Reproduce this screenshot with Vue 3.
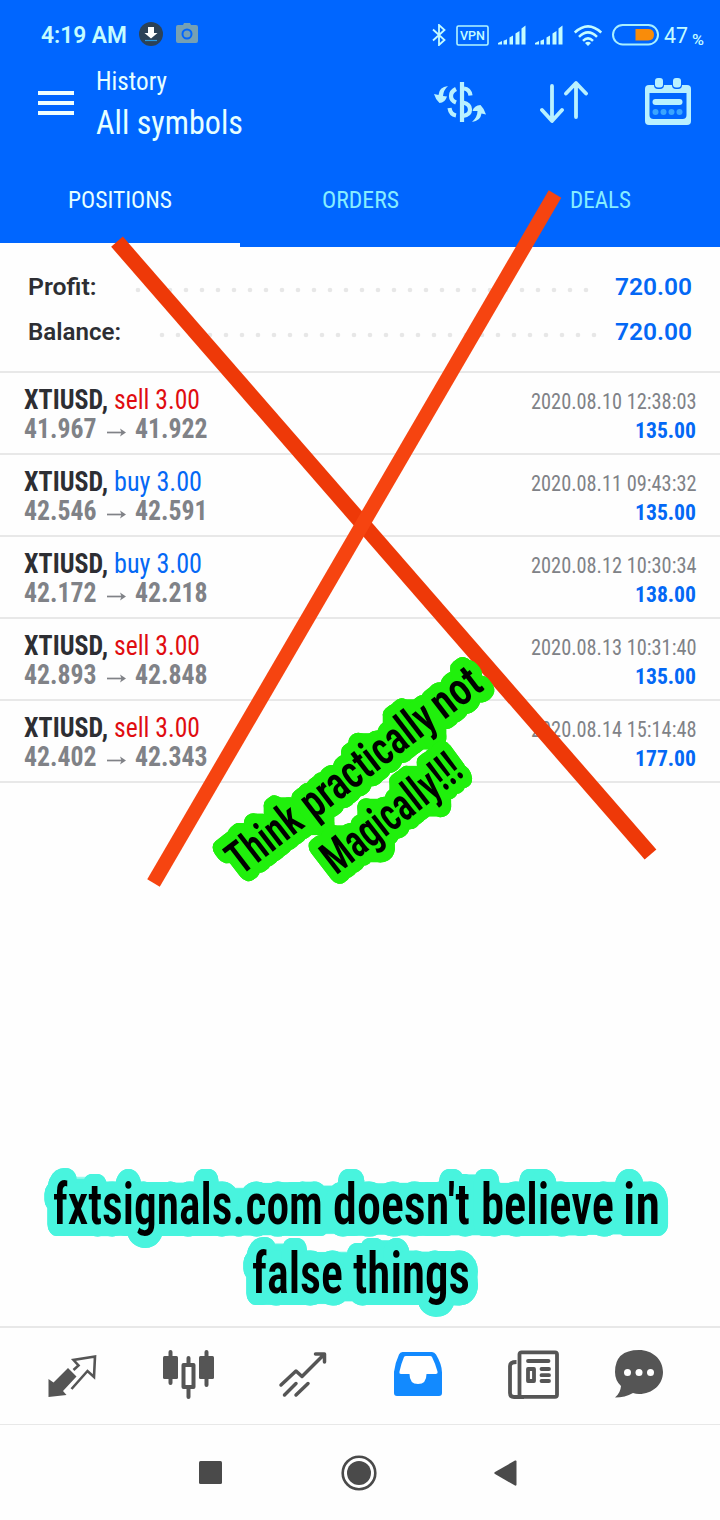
<template>
  <div class="screen">
    <header class="header">
      <div class="status">
        <FitText class="clock" text="4:19 AM" :w="86" />
        <svg class="download" width="24" height="24" viewBox="0 0 24 24">
          <circle cx="12" cy="12" r="12" fill="#2c4257" />
          <path d="M9 5h6v6h3.500L12 16.500 5.500 11H9z" fill="#fff" />
          <path d="M6 18.500h12" stroke="#2b9be0" stroke-width="1.200" />
        </svg>
        <svg class="camera" width="22" height="20" viewBox="0 0 22 20">
          <path d="M7 2l1-2h6l1 2h5q2 0 2 2v14q0 2-2 2H2q-2 0-2-2V4q0-2 2-2z" fill="#76a0b4" />
          <circle cx="11" cy="11" r="4.500" fill="none" stroke="#0066ff" stroke-width="2" />
        </svg>
        <svg class="bluetooth" width="14" height="22" viewBox="0 0 14 22">
          <path d="M1 5.500L12.500 16 7 21V1l5.500 5L1 16.500" fill="none" stroke="#c4fcff" stroke-width="1.800" />
        </svg>
        <svg class="vpn" width="33" height="21" viewBox="0 0 33 21">
          <rect x="1" y="1" width="31" height="19" rx="1.500" fill="none" stroke="#b4f6ff" stroke-width="1.600" />
          <text x="4" y="14.700" textLength="25" lengthAdjust="spacingAndGlyphs">VPN</text>
        </svg>
        <svg v-for="n in 2" :key="n" class="signal" width="28" height="20" viewBox="0 0 28 20">
          <path d="M0 19.500v-1.500l4-2v3.500zM5.500 15.800l3.500-1.500v5.200H5.500zM11.500 12.500l3.500-2v9h-3.500zM17.500 8.500l4-2.500v13.500h-4zM23.500 3.500l4-3v19h-4z" fill="#c4fcff" />
        </svg>
        <svg class="wifi" width="28" height="21" viewBox="0 0 28 21">
          <g fill="none" stroke="#c4fcff" stroke-width="2.500">
            <path d="M.8 7.500Q14-4.800 27.200 7.500" />
            <path d="M5 11.800Q14 3 23 11.800" />
            <path d="M9 15.800Q14 10.800 19 15.800" />
          </g>
          <path d="M11 18q3-2.500 6 0l-3 3z" fill="#c4fcff" />
        </svg>
        <svg class="battery" width="47" height="22" viewBox="0 0 47 22">
          <rect x="1" y="1" width="45" height="19.500" rx="9.700" fill="none" stroke="#a8efff" stroke-width="2" />
          <path d="M23.500 5H36q6 0 6 5.800T36 16.500H23.500z" fill="#f98c0a" />
        </svg>
        <FitText class="level" text="47" :w="24" />
        <FitText class="percent" text="%" :w="12" />
      </div>

      <div class="bar">
        <div class="menu"><i></i><i></i><i></i></div>
        <div class="title">
          <FitText class="small" text="History" :w="71" />
          <FitText class="big" text="All symbols" :w="147" />
        </div>
        <svg class="currency" width="54" height="44" viewBox="0 0 54 44">
          <g fill="none" stroke="#b9f1ff" stroke-width="4.200">
            <path d="M28 2v40" />
            <path d="M22 9q-5 2.500-5 7t5 6.500M30 8.500q5.500.5 6.500 7M15.500 28q1 6.500 6.500 7.500M29 22.500q7 1.500 7 7t-7 6.500" />
          </g>
          <path d="M14 6Q9.500 10 9 16l4 .5Q11 23 5.500 23 1.500 19.500 0 14l4.500 1Q5 7 14 6z" fill="#b9f1ff" />
          <path d="M38 42q5.500-5 5.500-11h-5Q40 25.500 46.500 25q4 4 5.500 9.500l-4.500-1Q46.500 41 38 42z" fill="#b9f1ff" />
        </svg>
        <svg class="sort" width="48" height="44" viewBox="0 0 48 44">
          <path d="M12 6v34M2 30l10 11 10-11M36 37V4M26 13.500L36 3l10 10.500" fill="none" stroke="#b9f1ff" stroke-width="3.800" stroke-linecap="round" stroke-linejoin="round" />
        </svg>
        <svg class="calendar" width="46" height="47" viewBox="0 0 46 47">
          <rect y="7" width="46" height="40" rx="4" fill="#b9f1ff" />
          <path d="M4.500 15h37v22q0 4-4 4h-29q-4 0-4-4z" fill="#0066ff" />
          <rect x="9" y="-1" width="10" height="12" rx="4" fill="#0066ff" />
          <rect x="27" y="-1" width="10" height="12" rx="4" fill="#0066ff" />
          <rect x="10" y="0" width="8" height="9.500" rx="3" fill="#b9f1ff" />
          <rect x="28" y="0" width="8" height="9.500" rx="3" fill="#b9f1ff" />
          <rect x="7.500" y="21" width="30" height="6" rx="3" fill="#b9f1ff" />
          <g fill="#3aa5ff">
            <circle cx="10.500" cy="34" r="3" /><circle cx="18.500" cy="34" r="3" />
            <circle cx="26.500" cy="34" r="3" /><circle cx="34.500" cy="34" r="3" />
          </g>
        </svg>
      </div>

      <nav class="tabs">
        <div v-for="t in tabs" :key="t.name" class="tab" :class="{ active: t.active }">
          <FitText :text="t.name" :w="t.w" />
        </div>
      </nav>
    </header>

    <section class="summary">
      <div v-for="s in summary" :key="s.name" class="sum-row">
        <FitText class="label" :text="s.name" :w="s.w" />
        <svg class="dots" :width="s.count * 16" height="6">
          <circle v-for="n in s.count" :key="n" :cx="n * 16 - 13" cy="3" r="2.300" />
        </svg>
        <FitText class="value" text="720.00" :w="77" />
      </div>
    </section>

    <main class="list">
      <div v-for="d in deals" :key="d.date" class="deal">
        <div class="left">
          <div class="line">
            <FitText class="symbol" text="XTIUSD," :w="84" />
            <FitText :class="d.type" :text="d.type + ' 3.00'" :w="d.type === 'sell' ? 86 : 88" />
          </div>
          <div class="line prices">
            <FitText :text="d.from" :w="72.500" />
            <svg class="arrow" width="20" height="9" viewBox="0 0 20 9">
              <path d="M0 4.500h17" stroke="#808287" stroke-width="1.700" />
              <path d="M13 .5l6 4-6 4 1.500-4z" fill="#808287" />
            </svg>
            <FitText :text="d.to" :w="72.500" />
          </div>
        </div>
        <div class="right">
          <FitText class="date" :text="d.date" :w="165.500" />
          <FitText class="profit" :text="d.profit" :w="61" />
        </div>
      </div>
    </main>

    <footer class="nav">
      <svg width="52" height="50" viewBox="0 0 52 50">
        <path d="M1.500 29l5 3.500L21 18l8.500 8.500L16 41l3.500 4L1.500 47z" fill="#555" />
        <path d="M26.500 20l5-4.500-5-5.500L48 6.500 47 27l-6.500-6L24.500 39" fill="none" stroke="#555" stroke-width="2.600" />
      </svg>
      <svg width="52" height="50" viewBox="0 0 52 50">
        <path d="M8.500 2v31M44.500 2v33M26.500 8v8M26.500 38v9" stroke="#555" stroke-width="4" stroke-linecap="round" />
        <rect x="1" y="6" width="15" height="23" rx="1.500" fill="#555" />
        <rect x="37" y="6" width="15" height="23" rx="1.500" fill="#555" />
        <rect x="21.500" y="15" width="10" height="22" fill="#fff" stroke="#555" stroke-width="4" stroke-linejoin="round" />
      </svg>
      <svg width="52" height="50" viewBox="0 0 52 50">
        <path d="M4 35l15-14 6 5.500L47 4.500M38.500 4H47.500V12M7.500 45l11.500-11.500M19 45l12-11.500" fill="none" stroke="#555" stroke-width="3.500" stroke-linecap="round" stroke-linejoin="round" />
      </svg>
      <svg width="52" height="50" viewBox="0 0 52 50">
        <path d="M10.500 2h29.500q2.500 0 4 2.500 6 10 6 18V43q0 3-3 3h-42q-3 0-3-3V22Q3 13 7 4.500 8 2 10.500 2z" fill="#128aff" />
        <path d="M14 6h24q1.500 0 2 1 3.500 7 5.500 14.500.5 2.500-2 2.500H34.500q0 10-8.500 10t-8.500-10H9q-2 0-1.500-2.500Q9 14 12 7q.5-1 2-1z" fill="#fff" />
      </svg>
      <svg width="52" height="50" viewBox="0 0 52 50">
        <g fill="none" stroke="#555" stroke-width="3.800" stroke-linejoin="round">
          <rect x="12.500" y="2.300" width="37.500" height="44.500" rx="2" />
          <path d="M9.500 12q-6.500 0-6.500 4v27q0 4 4 4h10" />
          <path d="M21 11h20.500M34.500 19h7.500M34.500 25.200h7.500M34.500 31h7.500" stroke-linecap="round" />
          <rect x="21" y="19" width="6" height="12" />
        </g>
      </svg>
      <svg class="chat" width="52" height="50" viewBox="0 0 52 50">
        <path d="M26 0c13.500 0 24 9.500 24 22s-10.500 22-24 22q-3 0-6-1-8 4.500-18 4.500Q7.500 43 8 36 2 30.500 2 22 2 0 26 0z" fill="#555" />
        <g fill="#fff">
          <circle cx="14.500" cy="22.500" r="3.500" /><circle cx="26" cy="22.500" r="3.500" /><circle cx="37.500" cy="22.500" r="3.500" />
        </g>
      </svg>
    </footer>

    <div class="system">
      <svg width="23" height="23"><rect width="23" height="23" rx="1.500" /></svg>
      <svg class="home" width="36" height="36" viewBox="0 0 36 36">
        <circle cx="18" cy="18" r="16.300" fill="none" stroke="#4a4a4a" stroke-width="2.600" />
        <circle cx="18" cy="18" r="12" />
      </svg>
      <svg width="23" height="26" viewBox="0 0 23 26"><path d="M1 12L21 .5q1.500-.5 1.500 1v23q0 1.500-1.500 1L1 14q-1.500-1 0-2z" /></svg>
    </div>

    <!-- drawn over the whole screen -->
    <svg class="overlay" width="720" height="1520" viewBox="0 0 720 1520">
      <defs>
        <!-- closes the small gaps inside the thick outline -->
        <filter v-for="f in fills" :id="f.id" :key="f.id" filterUnits="userSpaceOnUse" x="0" y="600" width="720" height="720" color-interpolation-filters="sRGB">
          <feMorphology in="SourceAlpha" operator="dilate" radius="4" />
          <feMorphology operator="erode" radius="4" result="closed" />
          <feFlood :flood-color="f.color" />
          <feComposite in2="closed" operator="in" result="base" />
          <feMerge>
            <feMergeNode in="base" />
            <feMergeNode in="SourceGraphic" />
          </feMerge>
        </filter>
      </defs>
      <path d="M117 241.700L650.500 854.500" stroke="#ee3908" stroke-width="15.500" />
      <path d="M555 194L153.500 883" stroke="#f64410" stroke-width="14.500" />
      <g v-for="(l, i) in notes" :key="i" class="note" :class="l.color" :filter="`url(#fill-${l.color})`">
        <g :transform="l.at">
          <text v-for="n in l.words" :key="n.text" :x="n.x" y="0" :textLength="n.w" lengthAdjust="spacingAndGlyphs">{{ n.text }}</text>
        </g>
      </g>
    </svg>
  </div>
</template>

<script setup>
import { h } from "vue";

// one line of text squeezed to width w, baseline on the bottom edge of the box
const FitText = (props) =>
  h("svg", { width: props.w, height: 20, overflow: "visible" }, [
    h("text", { x: 0, y: 20, textLength: props.w, lengthAdjust: "spacingAndGlyphs" }, props.text),
  ]);
FitText.props = ["text", "w"];

const tabs = [
  { name: "POSITIONS", w: 104, active: true },
  { name: "ORDERS", w: 77 },
  { name: "DEALS", w: 61 },
];

const summary = [
  { name: "Profit:", w: 68.5, count: 29 },
  { name: "Balance:", w: 93, count: 28 },
];

const deals = [
  { type: "sell", from: "41.967", to: "41.922", date: "2020.08.10 12:38:03", profit: "135.00" },
  { type: "buy", from: "42.546", to: "42.591", date: "2020.08.11 09:43:32", profit: "135.00" },
  { type: "buy", from: "42.172", to: "42.218", date: "2020.08.12 10:30:34", profit: "138.00" },
  { type: "sell", from: "42.893", to: "42.848", date: "2020.08.13 10:31:40", profit: "135.00" },
  { type: "sell", from: "42.402", to: "42.343", date: "2020.08.14 15:14:48", profit: "177.00" },
];

const fills = [
  { id: "fill-green", color: "#20f00c" },
  { id: "fill-aqua", color: "#48f4de" },
];

const notes = [
  {
    color: "green",
    at: "translate(241 876) rotate(-37.5)",
    words: [
      { text: "Think", x: 0, w: 82 },
      { text: "practically", x: 92, w: 158 },
      { text: "not", x: 256, w: 52 },
    ],
  },
  {
    color: "green",
    at: "translate(336 875.5) rotate(-37.8)",
    words: [{ text: "Magically!!!", x: 0, w: 164 }],
  },
  {
    color: "aqua",
    at: "translate(53 1223.5)",
    words: [
      { text: "fxtsignals.com", x: 0, w: 270 },
      { text: "doesn't", x: 280, w: 137 },
      { text: "believe", x: 428, w: 133 },
      { text: "in", x: 570, w: 37 },
    ],
  },
  {
    color: "aqua",
    at: "translate(252 1293)",
    words: [
      { text: "false", x: 0, w: 91 },
      { text: "things", x: 101, w: 117 },
    ],
  },
];
</script>

<style>
body {
  background: #fefefe;
}
</style>

<style scoped>
.screen {
  position: relative;
  width: 720px;
  height: 1520px;
  overflow: hidden;
  background: #fefefe;
  font-family: Roboto, "Liberation Sans", sans-serif;
  font-stretch: condensed;
}
svg {
  display: block;
  flex: none;
}
.header {
  height: 247px;
  background: #0066ff;
}
.status {
  display: flex;
  align-items: flex-start;
  height: 68px;
  padding: 23px 0 0 41px;
  box-sizing: border-box;
  fill: #c4fcff;
  font-stretch: normal;
}
.clock {
  font-size: 23px;
  font-weight: 600;
}
.download {
  margin: -1px 0 0 12px;
}
.camera {
  margin-left: 13px;
}
.bluetooth {
  margin: 1px 0 0 234px;
}
.vpn {
  margin: 2px 0 0 10px;
  font-size: 12px;
  font-weight: 500;
}
.signal {
  margin: 2px 0 0 9px;
}
.wifi {
  margin: 2px 0 0 11px;
}
.battery {
  margin: 1px 0 0 10px;
}
.level {
  margin-left: 5px;
  font-size: 22px;
}
.percent {
  margin: 2px 0 0 4px;
  font-size: 15px;
  font-weight: 500;
}
.bar {
  display: flex;
  height: 82px;
  padding-left: 38px;
  fill: #e6ffff;
}
.menu {
  display: flex;
  flex-direction: column;
  gap: 6px;
  width: 36px;
  margin-top: 23px;
}
.menu i {
  height: 4px;
  background: #f0ffff;
}
.title {
  width: 150px;
  margin-left: 22px;
  padding-top: 2px;
}
.small {
  font-size: 26px;
}
.big {
  margin-top: 24px;
  font-size: 34px;
}
.currency {
  margin: 12px 0 0 188px;
}
.sort {
  margin: 12px 0 0 52px;
}
.calendar {
  margin: 10px 0 0 57px;
}
.tabs {
  display: flex;
  height: 97px;
}
.tab {
  display: flex;
  justify-content: center;
  flex: 1;
  padding-top: 38px;
  font-size: 24px;
  fill: #86edff;
}
.tab.active {
  height: 55px;
  border-bottom: 4px solid #fefefe;
  fill: #e6ffff;
}
.summary {
  height: 126px;
  padding: 28px 28px 0;
  box-sizing: border-box;
  border-bottom: 2px solid #e8e8e8;
}
.sum-row {
  display: flex;
  height: 45px;
  font-size: 24px;
  font-weight: 600;
  font-stretch: normal;
  fill: #2d2e33;
}
.dots {
  margin: 11.5px 0 0 38px;
  fill: #e7e7e7;
}
.value {
  margin-left: auto;
  fill: #0468f5;
}
.deal {
  display: flex;
  justify-content: space-between;
  height: 82px;
  padding: 16px 24px 0 24px;
  box-sizing: border-box;
  border-bottom: 2px solid #e8e8e8;
}
.line {
  display: flex;
  height: 29px;
}
.symbol {
  margin-right: 6px;
  font-size: 28px;
  font-weight: 700;
  fill: #2d2e33;
}
.sell,
.buy {
  font-size: 28px;
  fill: #e00c10;
}
.buy {
  fill: #0468f5;
}
.prices {
  font-size: 27px;
  font-weight: 700;
  fill: #808287;
}
.arrow {
  margin: 10px 8px 0 10.5px;
}
.right {
  display: flex;
  flex-direction: column;
  align-items: flex-end;
  gap: 9px;
}
.date {
  font-size: 22px;
  fill: #808287;
}
.profit {
  font-size: 22.5px;
  font-weight: 700;
  fill: #0468f5;
}
.nav {
  display: flex;
  gap: 63px;
  height: 99px;
  margin-top: 543px;
  padding: 22px 0 0 47px;
  box-sizing: border-box;
  border-top: 2px solid #e8e8e8;
  border-bottom: 1px solid #e8e8e8;
}
.chat {
  margin-left: -9px;
}
.system {
  display: flex;
  align-items: center;
  justify-content: space-between;
  height: 95px;
  padding: 0 203px 0 199px;
  fill: #4a4a4a;
}
.home {
  margin-left: 2px;
}
.overlay {
  position: absolute;
  top: 0;
  left: 0;
}
.note {
  fill: #000;
  stroke-linejoin: round;
  paint-order: stroke;
  font-weight: 600;
}
.green {
  font-size: 46px;
  stroke: #20f00c;
  stroke-width: 21px;
}
.aqua {
  font-size: 57px;
  stroke: #48f4de;
  stroke-width: 24px;
}
</style>
